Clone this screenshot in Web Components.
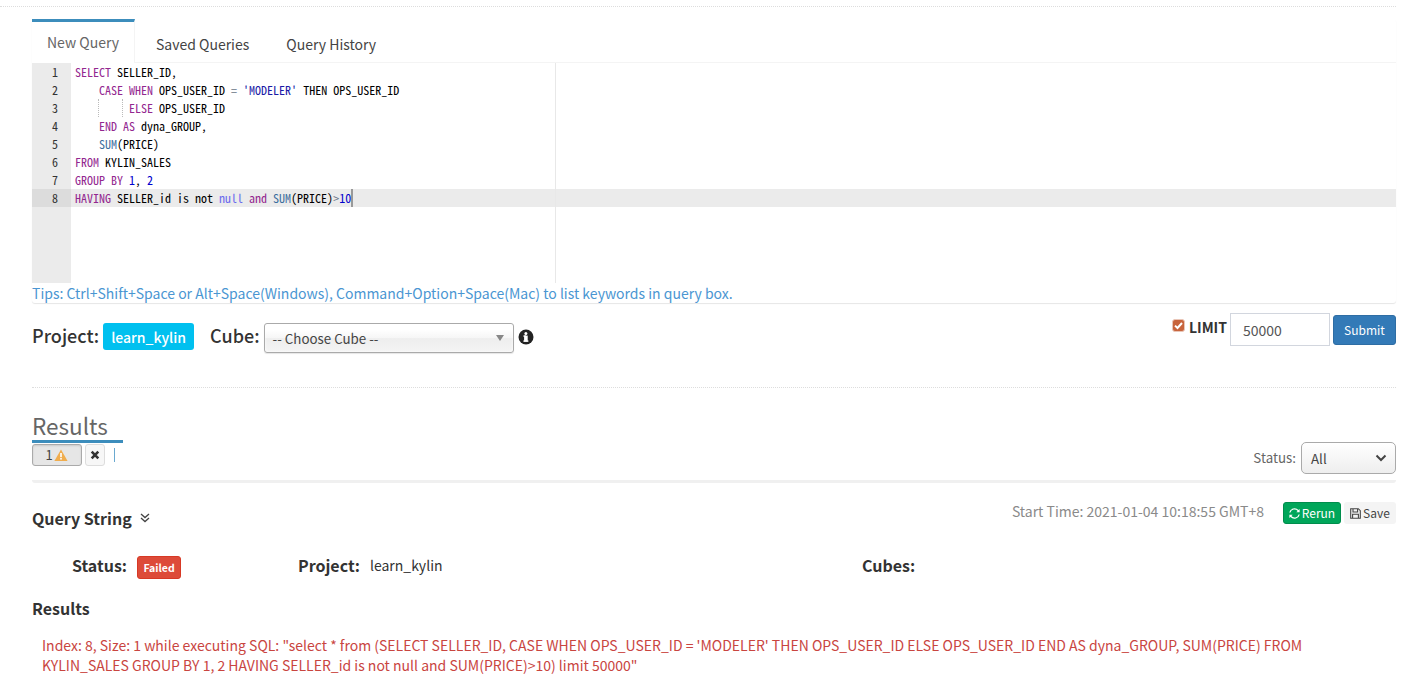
<!DOCTYPE html>
<html lang="en">
<head>
<meta charset="utf-8">
<title>Insight</title>
<style>
  html, body { margin: 0; background: #fff; }
  body {
    font-family: "Noto Sans CJK SC", "Open Sans", sans-serif;
    font-size: 14px;
    line-height: 20px;
    color: #333;
    overflow: hidden;
  }
</style>
</head>
<body>
<insight-page>
  <query-tabs></query-tabs>
  <query-controls></query-controls>
  <results-panel></results-panel>
</insight-page>

<script>
class InsightPage extends HTMLElement {
  constructor() {
    super();
    this.attachShadow({ mode: 'open' });
    this.shadowRoot.innerHTML = `
      <style>
        :host { display: block; padding: 6px 15px 0 32px; height: 690px; box-sizing: border-box; }
        .top { border-top: 1px dotted #ddd; margin: 0 0 12px -32px; }
      </style>
      <div class="top"></div>
      <slot></slot>
    `;
  }
}

class CodeEditor extends HTMLElement {
  constructor() {
    super();
    this.attachShadow({ mode: 'open' });
    const kw = s => `<span class="k">${s}</span>`;
    const fn = s => `<span class="f">${s}</span>`;
    const lines = [
      `${kw('SELECT')} SELLER_ID,`,
      `    ${kw('CASE')} ${kw('WHEN')} OPS_USER_ID <span class="o">=</span> <span class="s">'MODELER'</span> THEN OPS_USER_ID`,
      `    <span class="g">    </span><span class="g"> </span>${kw('ELSE')} OPS_USER_ID`,
      `    ${kw('END')} ${kw('AS')} dyna_GROUP,`,
      `    ${fn('SUM')}(PRICE)`,
      `${kw('FROM')} KYLIN_SALES`,
      `${kw('GROUP')} ${kw('BY')} <span class="n">1</span>, <span class="n">2</span>`,
      `${kw('HAVING')} SELLER_id is not <span class="c">null</span> ${kw('and')} ${fn('SUM')}(PRICE)<span class="o">&gt;</span><span class="n">10</span><span class="cursor"></span>`
    ];
    this.shadowRoot.innerHTML = `
      <style>
        :host { display: flex; height: 220px; overflow: hidden; font: 400 12px/18px "Noto Sans Mono CJK SC", "Liberation Mono", monospace; }
        .gutter { width: 39px; flex: none; background: #ebebeb; color: #333; box-sizing: border-box; }
        .gutter div { height: 18px; padding-right: 13px; text-align: right; }
        .gutter div.on { background: #dcdcdc; }
        .code { flex: 1; position: relative; }
        .line { height: 18px; padding-left: 4px; white-space: pre; color: #000; }
        .line.on { background: #ebebeb; }
        .margin { position: absolute; left: 484px; top: 0; bottom: 0; border-left: 1px solid #e8e8e8; }
        .k { color: #93278f; }
        .f { color: #3c6e9e; }
        .s { color: #1a1aa6; }
        .n { color: #0000cd; }
        .o { color: #687687; }
        .c { color: #6a6aee; }
        .g { display: inline-block; height: 18px; vertical-align: top; border-left: 1px dotted #bbb; margin-left: -1px; }
        .cursor { display: inline-block; width: 0; height: 18px; border-left: 2px solid #999; vertical-align: top; }
      </style>
      <div class="gutter">
        ${lines.map((_, i) => `<div class="${i === 7 ? 'on' : ''}">${i + 1}</div>`).join('')}
      </div>
      <div class="code">
        <div class="margin"></div>
        ${lines.map((l, i) => `<div class="line ${i === 7 ? 'on' : ''}">${l}</div>`).join('')}
      </div>
    `;
  }
}

class QueryTabs extends HTMLElement {
  constructor() {
    super();
    this.attachShadow({ mode: 'open' });
    this.shadowRoot.innerHTML = `
      <style>
        :host { display: block; box-shadow: 0 1px 1px rgba(0,0,0,.1); border-radius: 3px; }
        nav { display: flex; height: 43px; border-bottom: 1px solid #f4f4f4; }
        a { display: block; padding-top: 15px; font-size: 14px; line-height: 20px; color: #444; white-space: nowrap; }
        a.on {
          border-top: 3px solid #3c8dbc; border-right: 1px solid #f4f4f4; box-sizing: border-box;
          padding-top: 10px; padding-left: 15px; width: 103px; height: 44px; color: #666; margin-bottom: -1px; background: #fff;
        }
        a:nth-child(2) { margin-left: 21px; }
        a:nth-child(3) { margin-left: 37px; }
        .tips { height: 20px; color: #4a96d2; font-size: 14px; line-height: 20px; white-space: nowrap; }
      </style>
      <nav>
        <a class="on">New Query</a>
        <a>Saved Queries</a>
        <a>Query History</a>
      </nav>
      <code-editor></code-editor>
      <div class="tips">Tips: Ctrl+Shift+Space or Alt+Space(Windows), Command+Option+Space(Mac) to list keywords in query box.</div>
    `;
  }
}

class QueryControls extends HTMLElement {
  constructor() {
    super();
    this.attachShadow({ mode: 'open' });
    this.shadowRoot.innerHTML = `
      <style>
        :host { display: flex; justify-content: space-between; height: 84px; border-bottom: 1px dotted #ddd; }
        .left { display: flex; align-items: flex-start; padding-top: 20px; }
        .lab { font-size: 18px; line-height: 24px; font-weight: 500; color: #333; }
        .badge {
          margin-left: 4px; height: 27px; width: 91px; border-radius: 3px; background: #00c0ef; color: #fff;
          font-size: 14px; font-weight: 500; line-height: 28px; text-align: center;
        }
        .cube { margin-left: 16px; }
        .chosen {
          position: relative; margin-left: 4px; height: 28px; border: 1px solid #aaa; border-radius: 3px; padding-left: 8px; width: 240px;
          background: linear-gradient(#fff 20%, #f6f6f6 50%, #eee 52%, #f4f4f4); color: #444; font-size: 13.33px; line-height: 29px;
          box-shadow: 0 0 3px #fff inset, 0 1px 1px rgba(0,0,0,.1);
        }
        .chosen::after {
          content: ""; position: absolute; right: 9px; top: 11px; border: 4px solid transparent; border-top: 6px solid #888; border-bottom: 0;
        }
        .info { margin: 6px 0 0 4px; width: 16px; height: 16px; }
        .right { display: flex; align-items: flex-start; padding-top: 10px; }
        .check { width: 13px; height: 13px; margin-top: 6px; }
        .limit { font-size: 14px; font-weight: 700; line-height: 20px; margin: 4px 3px 0 4px; color: #333; }
        .limit-input {
          width: 100px; height: 33px; box-sizing: border-box; border: 1px solid #d2d6de; padding-left: 12px;
          font-size: 14px; line-height: 33px; color: #555;
        }
        .submit {
          margin: 2px 0 0 3px; width: 63px; height: 30px; box-sizing: border-box; background: #337ab7; border: 1px solid #2e6da4; border-radius: 3px;
          color: #fff; text-align: center; font-size: 12px; line-height: 28px;
        }
      </style>
      <div class="left">
        <span class="lab">Project:</span>
        <span class="badge">learn_kylin</span>
        <span class="lab cube">Cube:</span>
        <div class="chosen">-- Choose Cube --</div>
        <svg class="info" viewBox="0 0 16 16"><circle cx="8" cy="8" r="7.5" fill="#222"/><rect x="6.1" y="6.6" width="3.6" height="6" fill="#fff"/><rect x="5.4" y="6.4" width="2.6" height="1.3" fill="#fff"/><rect x="5.4" y="11.4" width="5" height="1.4" fill="#fff"/><circle cx="7.9" cy="4.4" r="1.5" fill="#fff"/></svg>
      </div>
      <div class="right">
        <svg class="check" viewBox="0 0 13 13"><rect x=".5" y=".5" width="12" height="12" rx="2.5" fill="#c8643c" stroke="#e9c6b8"/><path d="M3 6.6 5.5 9 10 4" fill="none" stroke="#fff" stroke-width="2"/></svg>
        <span class="limit">LIMIT</span>
        <div class="limit-input">50000</div>
        <div class="submit">Submit</div>
      </div>
    `;
  }
}

class ResultsPanel extends HTMLElement {
  constructor() {
    super();
    this.attachShadow({ mode: 'open' });
    this.shadowRoot.innerHTML = `
      <style>
        :host { display: block; }
        .head { display: flex; justify-content: space-between; height: 95px; box-sizing: border-box; border-bottom: 3px solid #f0f0f0; border-radius: 3px; padding-top: 23px; }
        h2 { margin: 0; width: 91px; height: 32px; box-sizing: border-box; border-bottom: 3px solid #3c8dbc; font-size: 22.5px; font-weight: 400; line-height: 29px; color: #666; }
        .runs { display: flex; align-items: center; margin-top: 1px; height: 22px; }
        .run { width: 50px; height: 22px; box-sizing: border-box; border: 1px solid #aaa; background: #e6e6e6; border-radius: 3px; display: flex; align-items: center; justify-content: center; font-size: 13px; color: #444; box-shadow: inset 0 1px 2px rgba(0,0,0,.12); padding-right: 1px; gap: 1px; }
        .close { width: 20px; height: 22px; box-sizing: border-box; margin-left: 3px; border: 1px solid #ddd; border-radius: 3px; background: #f7f7f7; display: flex; align-items: center; justify-content: center; }
        .bar { width: 1px; height: 14px; background: #6aa9d0; margin-left: 9px; }
        .status { display: flex; align-items: center; margin-top: 31px; height: 32px; font-size: 13.33px; color: #666; }
        .status div {
          position: relative; width: 95px; height: 32px; box-sizing: border-box; margin-left: 5px; border: 1px solid #aaa; border-radius: 5px;
          padding-left: 9px; font-size: 13.33px; line-height: 32px; color: #444; background: linear-gradient(#fff, #eee);
        }
        .status svg { position: absolute; right: 8px; top: 11px; }
        .row { display: flex; justify-content: space-between; height: 65px; }
        h3 { margin: 0; font-size: 16px; font-weight: 700; line-height: 24px; color: #333; }
        .qs { display: flex; align-items: center; padding-top: 23px; height: 24px; }
        .qs svg { margin-left: 8px; }
        .meta { display: flex; padding-top: 16px; }
        .time { font-size: 14px; color: #8a8a8a; line-height: 24px; margin-right: 19px; }
        .btn { margin-top: 3px; height: 22px; box-sizing: border-box; border-radius: 3px; font-size: 12px; line-height: 22px; display: flex; align-items: center; justify-content: center; gap: 2px; }
        .rerun { width: 58px; background: #00a65a; border: 1px solid #008d4c; color: #fff; }
        .save { width: 52px; margin-left: 3px; background: #f4f4f4; color: #444; }
        .info { display: grid; grid-template-columns: 226px 564px 1fr; padding-left: 40px; height: 34px; align-items: center; }
        .info b { font-size: 16px; font-weight: 700; color: #333; }
        .cell { display: flex; align-items: center; }
        .failed { margin: 4px 0 0 10px; width: 44px; height: 23px; background: #dd4b39; border: 1px solid #d73925; box-sizing: border-box; border-radius: 3px; color: #fff; font-size: 10.5px; font-weight: 700; line-height: 22px; text-align: center; }
        .pname { margin-left: 10px; font-size: 14px; color: #333; }
        h3.res { margin-top: 14px; }
        .err { margin: 15px 10px 0 10px; color: #c9453f; font-size: 14px; line-height: 20px; }
      </style>
      <div class="head">
        <div>
          <h2>Results</h2>
          <div class="runs">
            <div class="run">1<svg width="14" height="12" viewBox="0 0 14 12"><path d="M7 .5 13.6 12H.4Z" fill="#f0ad4e"/><rect x="6.2" y="4" width="1.6" height="4.2" fill="#fff"/><rect x="6.2" y="9" width="1.6" height="1.6" fill="#fff"/></svg></div>
            <div class="close"><svg width="10" height="10" viewBox="0 0 10 10"><path d="M1.7 1.7 8.3 8.3M8.3 1.7 1.7 8.3" stroke="#333" stroke-width="2.6"/></svg></div>
            <div class="bar"></div>
          </div>
        </div>
        <div class="status">Status:<div>All<svg width="12" height="8" viewBox="0 0 12 8"><path d="M1.5 1.5 6 6l4.5-4.5" fill="none" stroke="#444" stroke-width="2"/></svg></div></div>
      </div>
      <div class="row">
        <div class="qs"><h3>Query String</h3><svg width="10" height="10" viewBox="0 0 10 10"><path d="M1 1 5 4.6 9 1M1 5l4 3.6L9 5" fill="none" stroke="#444" stroke-width="1.3"/></svg></div>
        <div class="meta">
          <span class="time">Start Time: 2021-01-04 10:18:55 GMT+8</span>
          <div class="btn rerun"><svg width="11" height="11" viewBox="0 0 12 12"><path d="M1.6 5A4.5 4.5 0 0 1 9.4 3.2L8 4.6h3.6V1L10.4 2.2A6 6 0 0 0 .2 5ZM10.4 7A4.5 4.5 0 0 1 2.6 8.8L4 7.4H.4V11l1.2-1.2A6 6 0 0 0 11.8 7Z" fill="#fff"/></svg>Rerun</div>
          <div class="btn save"><svg width="11" height="11" viewBox="0 0 11 11"><path d="M.7.7h7.6l2 2v7.6H.7ZM3 1v3h4.6V1M2.6 10V6.2h5.8V10" fill="none" stroke="#444" stroke-width="1.1"/></svg>Save</div>
        </div>
      </div>
      <div class="info">
        <div class="cell"><b>Status:</b><span class="failed">Failed</span></div>
        <div class="cell"><b>Project:</b><span class="pname">learn_kylin</span></div>
        <div class="cell"><b>Cubes:</b></div>
      </div>
      <h3 class="res">Results</h3>
      <div class="err">Index: 8, Size: 1 while executing SQL: "select * from (SELECT SELLER_ID, CASE WHEN OPS_USER_ID = 'MODELER' THEN OPS_USER_ID ELSE OPS_USER_ID END AS dyna_GROUP, SUM(PRICE) FROM KYLIN_SALES GROUP BY 1, 2 HAVING SELLER_id is not null and SUM(PRICE)&gt;10) limit 50000"</div>
    `;
  }
}

customElements.define('insight-page', InsightPage);
customElements.define('code-editor', CodeEditor);
customElements.define('query-tabs', QueryTabs);
customElements.define('query-controls', QueryControls);
customElements.define('results-panel', ResultsPanel);
</script>
</body>
</html>
